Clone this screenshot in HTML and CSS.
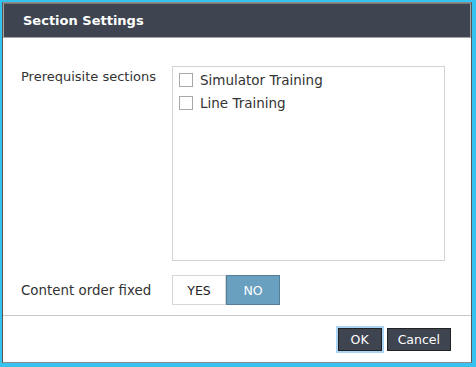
FILE: index.html
```html
<!DOCTYPE html>
<html lang="en">
<head>
  <meta charset="UTF-8">
  <title>Section Settings</title>
  <link rel="stylesheet" href="styles.css">
</head>
<body>
  <div class="dialog">
    <div class="dialog-header">Section Settings</div>

    <div class="dialog-body">
      <div class="row">
        <div class="row-label">Prerequisite sections</div>
        <div class="list-box">
          <label class="list-item"><span class="box"></span>Simulator Training</label>
          <label class="list-item"><span class="box"></span>Line Training</label>
        </div>
      </div>

      <div class="row row-toggle">
        <div class="row-label">Content order fixed</div>
        <div class="toggle">
          <span class="toggle-opt">YES</span>
          <span class="toggle-opt active">NO</span>
        </div>
      </div>
    </div>

    <div class="dialog-footer">
      <button class="btn focused">OK</button>
      <button class="btn">Cancel</button>
    </div>
  </div>
</body>
</html>
```

FILE: styles.css
```css
html {
  box-sizing: border-box;
}
*, *:before, *:after {
  box-sizing: inherit;
}
body {
  margin: 0;
  height: 367px;
  background: #35c2ef;
  font-family: "DejaVu Sans", sans-serif;
  font-size: 13px;
  color: #333;
  padding: 2px 4px 4px 2px;
}
.dialog {
  height: 100%;
  background: #fff;
  border: 1px solid #8c8c8c;
  border-left-color: #555;
  border-right-color: #555;
  display: flex;
  flex-direction: column;
}
.dialog-header {
  background: #3e4550;
  color: #fff;
  font-weight: bold;
  font-size: 13px;
  height: 35px;
  line-height: 33px;
  padding-left: 19px;
  border: 1px solid #a5a5a5;
  border-top-color: #777;
}
.dialog-body {
  flex: 1;
  padding: 28px 0 0 18px;
  border-bottom: 1px solid #c8c8c8;
}
.row {
  display: flex;
}
.row-label {
  width: 151px;
  padding-top: 3px;
}
.list-box {
  width: 273px;
  height: 195px;
  border: 1px solid #d3d3d3;
  padding: 1px 0 0 6px;
  font-size: 13.5px;
}
.list-item {
  display: flex;
  align-items: center;
  height: 23px;
}
.box {
  width: 14px;
  height: 14px;
  border: 1px solid #a8a8a8;
  margin-right: 7px;
}
.row-toggle {
  margin-top: 14px;
  align-items: center;
}
.row-toggle .row-label {
  padding-top: 0;
  font-size: 13.4px;
}
.toggle {
  display: flex;
  height: 30px;
}
.toggle-opt {
  width: 54px;
  border: 1px solid #d6d6d6;
  display: flex;
  align-items: center;
  justify-content: center;
  font-size: 12.5px;
  color: #222;
}
.toggle-opt.active {
  background: #69a0bf;
  border-color: #557f99;
  color: #fff;
}
.dialog-footer {
  height: 46px;
  display: flex;
  justify-content: flex-end;
  align-items: center;
  gap: 5px;
  padding-right: 20px;
}
.btn {
  background: #3e4550;
  color: #fff;
  border: 1px solid #222;
  font-family: inherit;
  font-size: 12.5px;
  height: 23px;
  padding: 0 10px;
}
.btn.focused {
  box-shadow: 0 0 0 2px #a9d4f5;
  padding: 0 12px;
}
```
